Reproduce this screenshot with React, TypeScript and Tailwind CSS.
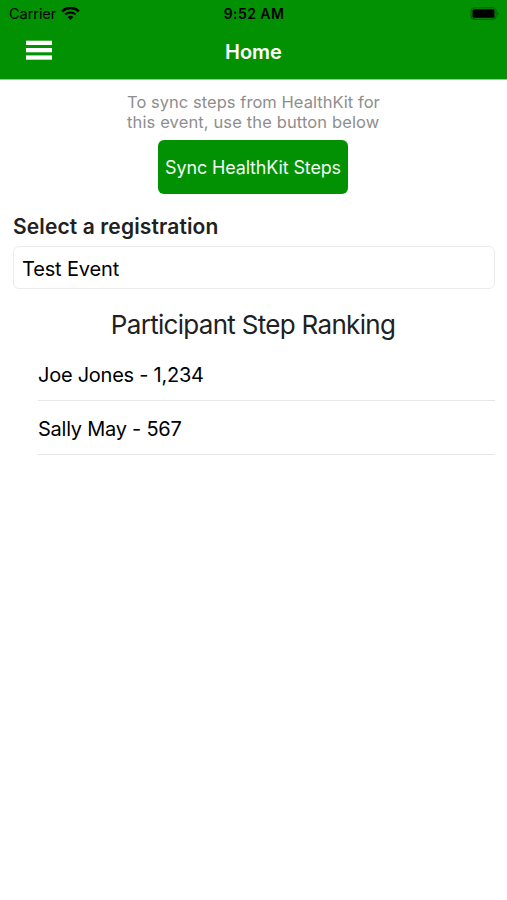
const participants = [
  { id: 1, name: "Joe Jones", steps: 1234 },
  { id: 2, name: "Sally May", steps: 567 },
];

function WifiIcon() {
  return (
    <svg className="h-[14px] w-[19px]" viewBox="0 0 19 14" fill="none" stroke="currentColor">
      <path d="M1.2 4.3a11.8 11.8 0 0 1 16.6 0" strokeWidth="2.5" />
      <path d="M4.2 7.6a7.6 7.6 0 0 1 10.6 0" strokeWidth="2.1" />
      <path d="M6.6 10.1a4.2 4.2 0 0 1 5.8 0L9.5 13z" fill="currentColor" stroke="none" />
    </svg>
  );
}

function BatteryIcon() {
  return (
    <svg className="h-[14px] w-[30px]" viewBox="0 0 30 14">
      <rect x="1" y="0.8" width="25" height="11.4" rx="3" fill="none" stroke="#000" strokeOpacity="0.4" />
      <rect x="2.5" y="2.2" width="22" height="8.6" rx="1.6" fill="#000" />
      <path d="M27.3 4.6v4c1.5-.6 1.5-3.4 0-4z" fill="#000" fillOpacity="0.4" />
    </svg>
  );
}

function MenuIcon() {
  return (
    <svg className="h-[20px] w-[26px]" viewBox="0 0 26 20" fill="#fff">
      <rect y="0.7" width="26" height="4.3" />
      <rect y="8" width="26" height="4.3" />
      <rect y="15.4" width="26" height="4.3" />
    </svg>
  );
}

function StatusBar() {
  return (
    <div className="grid h-[27px] grid-cols-3 items-center pr-[7px] pl-[9px] text-[14.5px] text-black">
      <div className="flex items-center gap-[5px]">
        <span className="tracking-[-0.05px]">Carrier</span>
        <WifiIcon />
      </div>
      <span className="pr-px text-center text-[14px] font-semibold tracking-[0.45px]">9:52 AM</span>
      <div className="flex justify-end">
        <BatteryIcon />
      </div>
    </div>
  );
}

function NavBar() {
  return (
    <div className="grid h-[52px] grid-cols-3 items-center px-[26px]">
      <button type="button" aria-label="Menu" className="flex w-[26px] pb-[6px]">
        <MenuIcon />
      </button>
      <h1 className="pb-[2px] text-center text-[20px] font-semibold text-white">Home</h1>
    </div>
  );
}

export default function App() {
  return (
    <div className="flex h-screen flex-col bg-white font-['Inter','Liberation_Sans',sans-serif] text-black">
      <header className="border-b border-[#8fce90] bg-[#029103]">
        <StatusBar />
        <NavBar />
      </header>

      <main className="flex flex-col pt-[12px] pr-[12px] pl-[13px]">
        <p className="mx-auto w-[254px] text-[16.5px] leading-[20px] tracking-[0.04px] whitespace-nowrap text-[#8e8e8e]">
          To sync steps from HealthKit for
          <br />
          <span className="tracking-[0.13px]">this event, use the button below</span>
        </p>
        <button
          type="button"
          className="mt-[8px] mr-[147px] ml-[145px] h-[54px] rounded-[6px] bg-[#029103] text-[18px] tracking-[-0.15px] whitespace-nowrap text-[#f2fbf2]"
        >
          Sync HealthKit Steps
        </button>

        <label className="mt-[18px] text-[21px] leading-[30px] font-semibold tracking-[0.12px] text-[#212121]">
          Select a registration
        </label>
        <div className="mt-[4px] flex h-[43px] items-center rounded-[6px] border border-[#ececec] px-[8px] pt-[3px] text-[20px] tracking-[-0.15px]">
          Test Event
        </div>

        <h2 className="mt-[20px] pr-[2px] text-center text-[26px] leading-[32px] tracking-[-0.7px] text-[#212121]">
          Participant Step Ranking
        </h2>
        <ul className="mt-[6px] pl-[25px]">
          {participants.map(p => (
            <li
              key={p.id}
              className="flex h-[54px] items-center border-b border-[#e6e6e6] pt-[3px] text-[20px] tracking-[-0.25px]"
            >
              {p.name} - {p.steps.toLocaleString("en-US")}
            </li>
          ))}
        </ul>
      </main>
    </div>
  );
}
